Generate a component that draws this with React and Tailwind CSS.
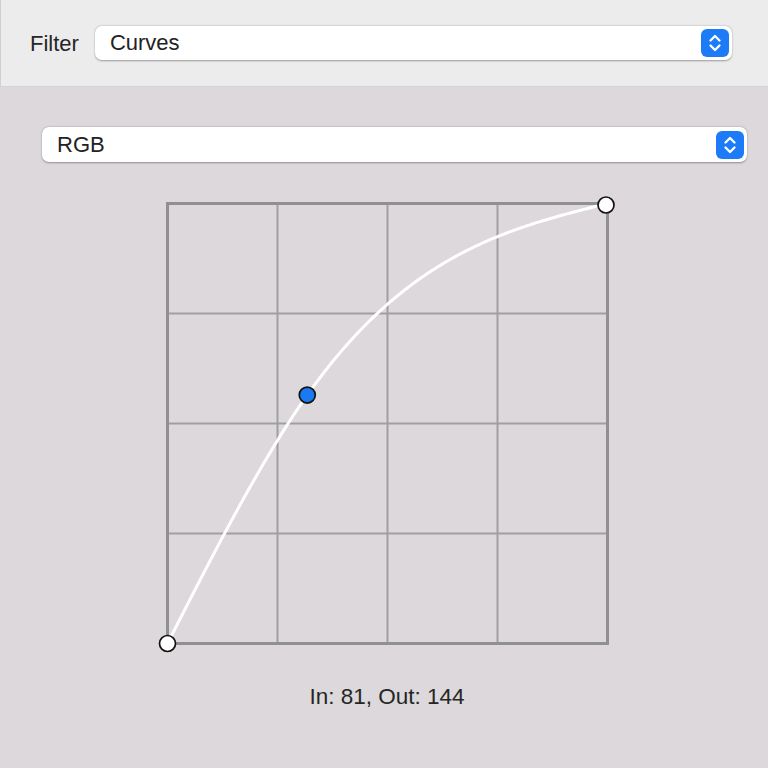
import React from 'react'

// natural cubic spline through the curve's control points (0..255)
const points = [
  [0, 0],
  [81, 144],
  [255, 255],
]

const toX = (v) => 10.5 + (v / 255) * 440
const toY = (v) => 450.5 - (v / 255) * 440

const buildPath = () => {
  const [p0, p1, p2] = points
  const h0 = p1[0] - p0[0]
  const h1 = p2[0] - p1[0]
  const m1 = (6 * ((p2[1] - p1[1]) / h1 - (p1[1] - p0[1]) / h0)) / (2 * (h0 + h1))
  const pts = []
  for (let x = 0; x <= 255; x += 1) {
    let y
    if (x <= p1[0]) {
      y = (m1 * Math.pow(x - p0[0], 3)) / (6 * h0) +
        (p0[1] / h0) * (p1[0] - x) +
        (p1[1] / h0 - (m1 * h0) / 6) * (x - p0[0])
    } else {
      y = (m1 * Math.pow(p2[0] - x, 3)) / (6 * h1) +
        (p1[1] / h1 - (m1 * h1) / 6) * (p2[0] - x) +
        (p2[1] / h1) * (x - p1[0])
    }
    y = Math.max(0, Math.min(255, y))
    pts.push(`${toX(x).toFixed(2)},${toY(y).toFixed(2)}`)
  }
  return 'M' + pts.join(' L')
}

const Stepper = () => (
  <div className="w-[28px] h-[28px] rounded-[6px] bg-[#1d7bf7] flex items-center justify-center">
    <svg width="16" height="20" viewBox="0 0 16 20" fill="none">
      <path d="M3.5 7.5 L8 3 L12.5 7.5" stroke="white" strokeWidth="2.3" strokeLinecap="round" strokeLinejoin="round" />
      <path d="M3.5 12.5 L8 17 L12.5 12.5" stroke="white" strokeWidth="2.3" strokeLinecap="round" strokeLinejoin="round" />
    </svg>
  </div>
)

const Select = ({ label, className }) => (
  <div className={`bg-white rounded-[7px] shadow-[0_0.5px_2px_rgba(0,0,0,0.35)] flex items-center justify-between pl-[15px] pr-[3px] ${className}`}>
    <span className="text-[22px] text-[#222] leading-none">{label}</span>
    <Stepper />
  </div>
)

const App = () => {
  const d = buildPath()
  const grid = [120.5, 230.5, 340.5]
  return (
    <div className="w-[768px] h-[768px] bg-[#dcd8db] font-['Liberation_Sans',Arial,sans-serif] overflow-hidden">
      <div className="h-[87px] bg-[#ececec] border-b border-[#d6d3d6] border-l border-l-[#d0d0d0] flex items-center pl-[29px] pr-[36px]">
        <span className="text-[22px] text-[#262626] mr-[16px]">Filter</span>
        <Select label="Curves" className="flex-1 h-[34px]" />
      </div>

      <div className="pt-[40px]">
        <Select label="RGB" className="ml-[42px] mr-[21px] h-[35px]" />

        <svg width="460" height="462" className="ml-[157px] mt-[31px] block">
          {grid.map((g) => (
            <line key={'v' + g} x1={g} y1="10.5" x2={g} y2="450.5" stroke="#a09fa0" strokeWidth="2" />
          ))}
          {grid.map((g) => (
            <line key={'h' + g} x1="10.5" y1={g} x2="450.5" y2={g} stroke="#a09fa0" strokeWidth="2" />
          ))}
          <rect x="10.5" y="10.5" width="440" height="440" fill="none" stroke="#919091" strokeWidth="3" />
          <path d={d} fill="none" stroke="white" strokeWidth="3" strokeLinecap="round" />
          <circle cx="10.5" cy="450.5" r="8" fill="white" stroke="#111" strokeWidth="1.7" />
          <circle cx="449" cy="12" r="8" fill="white" stroke="#111" strokeWidth="1.7" />
          <circle cx={toX(81)} cy={toY(144)} r="8" fill="#1a7af2" stroke="#111" strokeWidth="1.7" />
        </svg>

        <div className="mt-[29px] text-center text-[22.5px] leading-[26px] text-[#262626] pl-[6px]">
          In: 81, Out: 144
        </div>
      </div>
    </div>
  )
}

export default App
